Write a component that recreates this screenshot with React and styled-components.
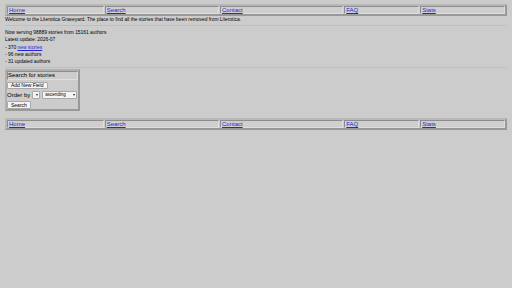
import React from 'react';
import styled, { createGlobalStyle } from 'styled-components';

const GlobalStyle = createGlobalStyle`
	html, body {
		margin: 0;
		padding: 0;
		background: #cccccc;
	}
	body {
		font-family: "Liberation Sans", Arial, sans-serif;
		color: #000;
	}
`;

const links = ['Home', 'Search', 'Contact', 'FAQ', 'Stats'];

function Nav({ bottom }) {
	return (
		<NavBar bottom={bottom}>
			{links.map((l) => (
				<NavCell key={l}>
					<NavLink href="#">{l}</NavLink>
				</NavCell>
			))}
		</NavBar>
	);
}

function App() {
	return (
		<>
			<GlobalStyle />
			<Page>
				<Nav />
				<Welcome>
					Welcome to the Literotica Graveyard. The place to find all the stories that have been removed from Literotica.
				</Welcome>
				<Rule />
				<Stats>
					<div>Now serving 98889 stories from 15161 authors</div>
					<div>Latest update: 2026-07</div>
					<div>
						- 370 <NavLink href="#">new stories</NavLink>
					</div>
					<div>- 96 new authors</div>
					<div>- 31 updated authors</div>
				</Stats>
				<Rule after />
				<SearchBox>
					<SearchTitle>Search for stories</SearchTitle>
					<SearchBody>
						<Button>Add New Field</Button>
						<OrderRow>
							<span>Order by</span>
							<SelectWrap>
								<Select>
									<option></option>
								</Select>
							</SelectWrap>
							<SelectWrap wide>
								<Select>
									<option>ascending</option>
								</Select>
							</SelectWrap>
						</OrderRow>
						<Button tall>Search</Button>
					</SearchBody>
				</SearchBox>
				<Nav bottom />
			</Page>
		</>
	);
}

const Page = styled.div`
	padding: 4px 5px;
`;

const NavBar = styled.div`
	display: grid;
	grid-template-columns: 98fr 116fr 125fr 76fr 86fr;
	border: 2px solid #999999;
	border-top-color: #b8b8b8;
	border-left-color: #b8b8b8;
	gap: 1px;
	margin-top: ${({ bottom }) => (bottom ? '7px' : '0')};
`;

const NavCell = styled.div`
	border: 1px solid #8c8c8c;
	border-right-color: #dedede;
	border-bottom-color: #dedede;
	height: 6px;
	line-height: 6px;
	padding: 0 1px;
	font-size: 6px;
	background: #cfcfcf;
`;

const NavLink = styled.a`
	color: #2626d9;
	text-decoration: underline;
	text-underline-offset: 0.5px;
`;

const Welcome = styled.div`
	font-size: 4.9px;
	margin-top: 1px;
	line-height: 6px;
	white-space: nowrap;
`;

const Rule = styled.div`
	height: 0;
	border-top: 1px solid #bfbfbf;
	margin: ${({ after }) => (after ? '2px 0 1px' : '2px 0 3px')};
`;

const Stats = styled.div`
	font-size: 4.9px;
	line-height: 7.3px;
	white-space: nowrap;
`;

const SearchBox = styled.div`
	width: 71px;
	border: 2px solid #999999;
	border-top-color: #b0b0b0;
	border-left-color: #b0b0b0;
	font-size: 6px;
	padding: 0;
`;

const SearchTitle = styled.div`
	border: 1px solid #8c8c8c;
	border-right-color: #dedede;
	border-bottom-color: #dedede;
	height: 7px;
	line-height: 7px;
	padding: 0;
	white-space: nowrap;
`;

const SearchBody = styled.div`
	display: flex;
	flex-direction: column;
	align-items: flex-start;
	gap: 2px;
	padding: 2px 1px 0 0;
`;

const Button = styled.button`
	font-family: inherit;
	font-size: 5px;
	height: ${({ tall }) => (tall ? '8px' : '7px')};
	line-height: 5px;
	padding: 0 3px;
	background: #f4f4f4;
	border: 1px solid #a8a8a8;
	border-radius: 1px;
	color: #000;
	white-space: nowrap;
`;

const OrderRow = styled.div`
	display: flex;
	align-items: center;
	gap: 2px;
	font-size: 6px;
	line-height: 8px;
	white-space: nowrap;
`;

const SelectWrap = styled.span`
	position: relative;
	display: inline-block;
	width: ${({ wide }) => (wide ? '35px' : '8px')};
	height: 8px;
	&::after {
		content: '';
		position: absolute;
		right: 2px;
		top: 3px;
		border-left: 1.5px solid transparent;
		border-right: 1.5px solid transparent;
		border-top: 2px solid #222;
		pointer-events: none;
	}
`;

const Select = styled.select`
	appearance: none;
	display: block;
	box-sizing: border-box;
	font-family: inherit;
	font-size: 4.5px;
	width: 100%;
	height: 8px;
	line-height: 6px;
	padding: 0 0 0 2px;
	background: #f4f4f4;
	border: 1px solid #a8a8a8;
	border-radius: 1px;
	color: #000;
`;

export default App;
